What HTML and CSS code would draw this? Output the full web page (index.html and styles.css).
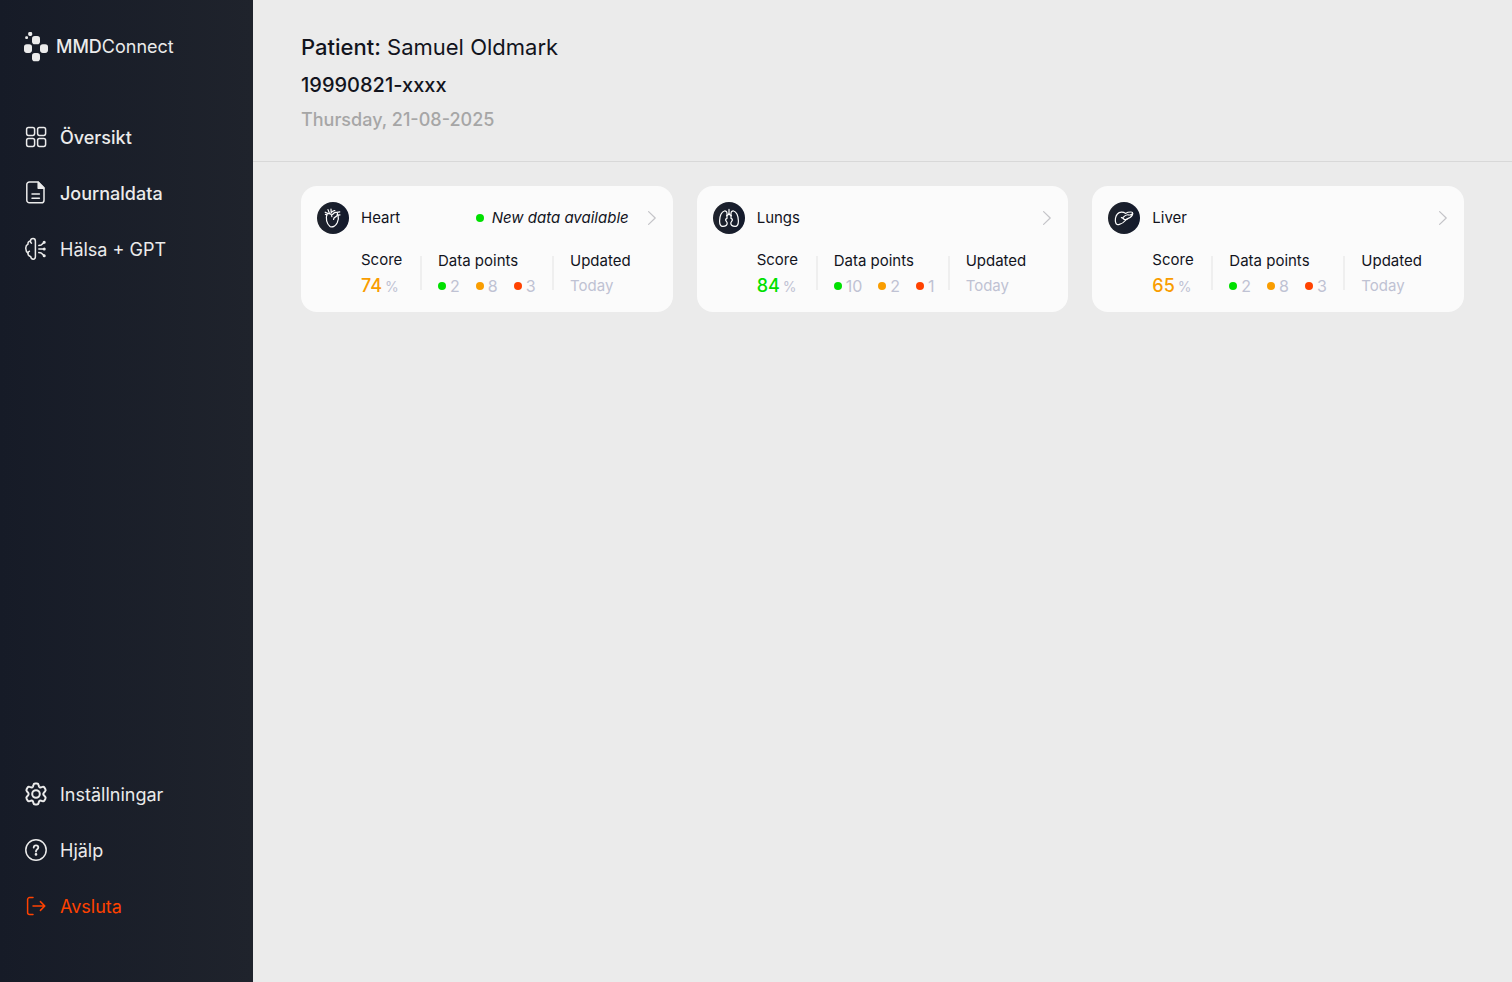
FILE: index.html
```html
<!DOCTYPE html>
<html lang="sv">
<head>
<meta charset="utf-8">
<meta name="viewport" content="width=device-width, initial-scale=1">
<title>MMDConnect</title>
<link rel="stylesheet" href="styles.css">
</head>
<body>
<div class="app">
  <aside class="sidebar">
    <a class="brand" href="#">
      <svg class="brand-mark" viewBox="0 0 24 30" aria-hidden="true">
        <rect x="1.2" y="4.2" width="2.8" height="2.8" rx="1"/>
        <rect x="4.2" y="0" width="4" height="4" rx="1.4"/>
        <rect x="8" y="4" width="8" height="8.2" rx="2.8"/>
        <rect x="0" y="12.3" width="8" height="8.6" rx="2.8"/>
        <rect x="16" y="12.3" width="8" height="8.6" rx="2.8"/>
        <rect x="8" y="21" width="8" height="8.2" rx="2.8"/>
      </svg>
      <span class="brand-name"><strong>MMD</strong>Connect</span>
    </a>
    <nav class="nav" aria-label="Huvudmeny">
      <a class="nav-item nav-item-strong" href="#">
        <svg class="icon" viewBox="0 0 24 24" aria-hidden="true">
          <rect x="2.6" y="2.6" width="8" height="7.8" rx="1.8"/>
          <rect x="13.6" y="2.6" width="8" height="7.8" rx="1.8"/>
          <rect x="2.6" y="13.6" width="8" height="7.8" rx="1.8"/>
          <rect x="13.6" y="13.6" width="8" height="7.8" rx="1.8"/>
        </svg>
        <span class="nav-label">Översikt</span>
      </a>
      <a class="nav-item nav-item-strong" href="#">
        <svg class="icon" viewBox="0 0 24 24" aria-hidden="true">
          <path d="M14.200 1H5.400a2.600 2.600 0 0 0-2.600 2.600v15.600a2.600 2.600 0 0 0 2.600 2.600h12a2.600 2.600 0 0 0 2.600-2.600V6.800z"/>
          <path class="filled" d="M14.200 1.200V7.200h5.600z"/>
          <path d="M8 13h7.400M8 17.200h7.400"/>
        </svg>
        <span class="nav-label">Journaldata</span>
      </a>
      <a class="nav-item" href="#">
        <svg class="icon" viewBox="0 0 24 24" aria-hidden="true">
          <path d="M11.400 4.200C11.400 2.600 10.400 1.600 9 1.600S6.600 2.600 6.400 4C4.600 4.200 3.800 5.400 4 7.200 2.400 8 1.600 9.600 1.800 11.600c0 2.200.8 3.600 2.200 4.400-.2 1.800.8 3.200 2.600 3.400.2 1.600 1.200 2.800 2.600 2.800 1.400 0 2.200-1 2.200-2.600z"/>
          <path d="M6.400 4c0 1 .4 1.800 1 2.200M4 16c0-1 .6-1.600 1.400-1.800M14.800 8.400l2.400-.4 2.600-2.400M14.800 12h5M14.800 15.600l2.400.4 2.600 2.400"/>
          <circle class="filled" cx="20.200" cy="5.200" r=".8"/>
          <circle class="filled" cx="20.200" cy="12" r=".8"/>
          <circle class="filled" cx="20.200" cy="18.800" r=".8"/>
        </svg>
        <span class="nav-label">Hälsa + GPT</span>
      </a>
    </nav>
    <nav class="nav nav-bottom" aria-label="Konto">
      <a class="nav-item" href="#">
        <svg class="icon icon-bold" viewBox="0 0 24 24" aria-hidden="true">
          <path d="M9.400 3c.2-1 .8-1.500 1.700-1.500h1.800c.9 0 1.500.5 1.700 1.500l.3 1.200c.3 1 1.200 1.400 2.200 1.100l1.300-.4c.9-.3 1.600 0 2 .7l1 1.700c.4.800.3 1.500-.4 2.200l-.9.900c-.9.900-.9 2.300 0 3.200l.9.900c.7.700.8 1.400.4 2.200l-1 1.700c-.4.700-1.100 1-2 .7l-1.300-.4c-1-.3-1.900.1-2.200 1.100l-.3 1.200c-.2 1-.8 1.500-1.700 1.500h-1.800c-.9 0-1.500-.5-1.700-1.500l-.3-1.200c-.3-1-1.200-1.400-2.200-1.100l-1.300.4c-.9.300-1.600 0-2-.7l-1-1.700c-.4-.8-.3-1.500.4-2.200l.9-.9c.9-.9.900-2.300 0-3.200l-.9-.9c-.7-.7-.8-1.400-.4-2.200l1-1.700c.4-.7 1.100-1 2-.7l1.300.4c1 .3 1.900-.1 2.200-1.100z"/>
          <circle cx="12" cy="12" r="3.800"/>
        </svg>
        <span class="nav-label">Inställningar</span>
      </a>
      <a class="nav-item" href="#">
        <svg class="icon" viewBox="0 0 24 24" aria-hidden="true">
          <circle cx="12" cy="12" r="10.200"/>
          <path class="heavy" d="M9.700 9.500C9.800 8.100 10.700 7.300 12 7.300s2.300.9 2.300 2.100c0 1-.6 1.500-1.300 2-.7.500-1 .9-1 1.800v.3"/>
          <circle class="filled" cx="12" cy="16.400" r=".6"/>
        </svg>
        <span class="nav-label">Hjälp</span>
      </a>
      <a class="nav-item nav-item-exit" href="#">
        <svg class="icon" viewBox="0 0 24 24" aria-hidden="true">
          <path d="M9 3.600H5.600a2 2 0 0 0-2 2v13a2 2 0 0 0 2 2H9M9 12h11.400M16.400 7.600l4.400 4.400-4.400 4.400"/>
        </svg>
        <span class="nav-label">Avsluta</span>
      </a>
    </nav>
  </aside>

  <main class="main">
    <header class="patient">
      <h1 class="patient-name"><strong>Patient:</strong> Samuel Oldmark</h1>
      <p class="patient-id">19990821-xxxx</p>
      <p class="patient-date">Thursday, 21-08-2025</p>
    </header>

    <section class="cards" aria-label="Organs">
      <article class="card">
        <div class="card-head">
          <span class="organ">
            <svg class="organ-icon" viewBox="0 0 32 32" aria-hidden="true">
              <path d="M10 12.600C8.400 16 9.600 22 13 24.400c2.400 1.400 5.600-.2 7.200-3.600 1.200-2.800 1.600-5.200.8-7.800"/>
              <path d="M8.200 10.200 11.200 11.600M10 12.800 8.400 12.400M11 7.600l1.400 3.600M14 7l.2 3.800M14.200 10.800c1.200-2 2.200-2.400 3.600-2.200M11.200 11.600c2.400-.4 3.800 1 3.600 3M15.600 12.400c1.200-1.800 2.600-2.400 4.200-2l3-.6M20.800 13.200l2.200-.4M20.400 11.400c.4 2.200-1.200 3.400-2.600 4-.8.400-1.200 1.200-1.200 2"/>
            </svg>
          </span>
          <h2 class="card-title">Heart</h2>
          <p class="notice"><span class="dot good"></span>New data available</p>
          <button class="open" type="button" aria-label="Open Heart"><svg class="chevron" viewBox="0 0 8 14" aria-hidden="true"><path d="M.6.6 7.200 7 .6 13.400"/></svg></button>
        </div>
        <div class="stats">
          <div class="stat stat-score"><h3 class="label">Score</h3><p class="score mid">74<span class="unit">%</span></p></div>
          <span class="rule"></span>
          <div class="stat"><h3 class="label">Data points</h3><p class="points"><span class="point"><span class="dot good"></span>2</span><span class="point"><span class="dot fair"></span>8</span><span class="point"><span class="dot poor"></span>3</span></p></div>
          <span class="rule"></span>
          <div class="stat"><h3 class="label">Updated</h3><p class="points updated">Today</p></div>
        </div>
      </article>

      <article class="card">
        <div class="card-head">
          <span class="organ">
            <svg class="organ-icon" viewBox="0 0 32 32" aria-hidden="true">
              <path d="M16 7.400v3.800M16 11.200c-.4 1.200-1.200 2-2.400 2.600M16 11.200c.4 1.200 1.200 2 2.400 2.600"/>
              <path d="M14 16.400V11.400c0-1.600-1-2.600-2.600-2.400C8.600 9.600 6.600 14 6.600 19c0 3.400 1 5.400 3.200 5.400 2.400-.2 4.400-1 4.400-3.200 0-1.600-1.600-2-1.600-3.400 0-.6.400-1 1.400-1.400zM18 16.400V11.400c0-1.600 1-2.600 2.600-2.400 2.800.6 4.800 5 4.800 10 0 3.400-1 5.400-3.200 5.400-2.400-.2-4.400-1-4.400-3.200 0-1.600 1.600-2 1.600-3.400 0-.6-.4-1-1.400-1.400z"/>
            </svg>
          </span>
          <h2 class="card-title">Lungs</h2>
          <button class="open" type="button" aria-label="Open Lungs"><svg class="chevron" viewBox="0 0 8 14" aria-hidden="true"><path d="M.6.6 7.200 7 .6 13.400"/></svg></button>
        </div>
        <div class="stats">
          <div class="stat stat-score"><h3 class="label">Score</h3><p class="score high">84<span class="unit">%</span></p></div>
          <span class="rule"></span>
          <div class="stat"><h3 class="label">Data points</h3><p class="points"><span class="point"><span class="dot good"></span>10</span><span class="point"><span class="dot fair"></span>2</span><span class="point"><span class="dot poor"></span>1</span></p></div>
          <span class="rule"></span>
          <div class="stat"><h3 class="label">Updated</h3><p class="points updated">Today</p></div>
        </div>
      </article>

      <article class="card">
        <div class="card-head">
          <span class="organ">
            <svg class="organ-icon" viewBox="0 0 32 32" aria-hidden="true">
              <path d="M17.400 11.400c-2.200-1.800-6-1.600-8 .6-2 2-2.600 6.400-1.600 9 .6 1.600 2 2 3.600 1.400 2-.6 4-1.600 5.400-3.400 1-1.400 1.800-2 3.400-2.600 2.600-1 4.400-3 4.600-5 0-1-.6-1.400-1.800-1.400-1.800 0-3.600.2-5.600 1.400z"/>
              <path d="M24.200 12c-1 1.200-2.400 1.200-4 .8-1.600-.2-3.400.8-4.800 2.400M13.400 15.600c1.400 0 2 1.200 2.800 1.800 1 .4 2 .2 3-.4"/>
            </svg>
          </span>
          <h2 class="card-title">Liver</h2>
          <button class="open" type="button" aria-label="Open Liver"><svg class="chevron" viewBox="0 0 8 14" aria-hidden="true"><path d="M.6.6 7.200 7 .6 13.400"/></svg></button>
        </div>
        <div class="stats">
          <div class="stat stat-score"><h3 class="label">Score</h3><p class="score mid">65<span class="unit">%</span></p></div>
          <span class="rule"></span>
          <div class="stat"><h3 class="label">Data points</h3><p class="points"><span class="point"><span class="dot good"></span>2</span><span class="point"><span class="dot fair"></span>8</span><span class="point"><span class="dot poor"></span>3</span></p></div>
          <span class="rule"></span>
          <div class="stat"><h3 class="label">Updated</h3><p class="points updated">Today</p></div>
        </div>
      </article>
    </section>
  </main>
</div>
</body>
</html>
```
FILE: styles.css
```css
* {
  box-sizing: border-box;
}

body,
h1,
h2,
h3,
p {
  margin: 0;
}

body {
  background: #ebebeb;
  color: #12141d;
  font-family: Inter, "Liberation Sans", sans-serif;
}

.app {
  display: flex;
  min-height: 100vh;
}

/* Sidebar */
.sidebar {
  flex: 0 0 253px;
  display: flex;
  flex-direction: column;
  padding: 32px 24px 63px;
  background: linear-gradient(90deg, #161b27, #1f232c);
  color: #ebebeb;
}

.brand {
  display: flex;
  align-items: center;
  gap: 8px;
  margin-bottom: 62px;
  color: inherit;
  text-decoration: none;
}

.brand-mark {
  width: 24px;
  height: 30px;
  fill: currentColor;
}

.brand-name {
  font-size: 18px;
  line-height: 24px;
}

.brand-name strong {
  font-weight: 500;
}

.nav {
  display: flex;
  flex-direction: column;
  gap: 30px;
}

.nav-bottom {
  margin-top: auto;
}

.nav-item {
  display: flex;
  align-items: center;
  gap: 12px;
  color: inherit;
  font-size: 18px;
  line-height: 24px;
  text-decoration: none;
}

.nav-label {
  padding-top: 2px;
}

.nav-item-strong {
  font-weight: 500;
}

.nav-item-exit {
  color: #ff4200;
}

.icon {
  width: 24px;
  height: 24px;
  fill: none;
  stroke: currentColor;
  stroke-width: 1.5;
  stroke-linecap: round;
  stroke-linejoin: round;
}

.icon-bold {
  stroke-width: 2;
}

.icon .heavy {
  stroke-width: 1.8;
}

.icon .filled {
  fill: currentColor;
}

/* Patient header */
.main {
  flex: 1;
  min-width: 0;
}

.patient {
  padding: 32px 48px 29px;
  border-bottom: 1px solid #d8d8d8;
}

.patient-name {
  font-size: 22px;
  font-weight: 400;
  line-height: 30px;
}

.patient-name strong {
  font-weight: 500;
}

.patient-id {
  margin-top: 10px;
  font-size: 20px;
  font-weight: 500;
  line-height: 26px;
}

.patient-date {
  margin-top: 10px;
  color: #a6a6a6;
  font-size: 18px;
  font-weight: 500;
  line-height: 24px;
}

/* Organ cards */
.cards {
  display: grid;
  grid-template-columns: repeat(3, minmax(0, 1fr));
  gap: 24px;
  padding: 24px 48px;
}

.card {
  padding: 16px 16px 13px;
  border-radius: 16px;
  background: #fbfbfb;
}

.card-head {
  display: flex;
  align-items: center;
}

.organ {
  width: 32px;
  height: 32px;
  margin-right: 12px;
  border-radius: 50%;
  background: linear-gradient(90deg, #1f232c, #131a2c);
}

.organ-icon {
  display: block;
  width: 32px;
  height: 32px;
  fill: none;
  stroke: #fff;
  stroke-width: 1.2;
  stroke-linecap: round;
  stroke-linejoin: round;
}

.card-title {
  font-size: 15px;
  font-weight: 400;
  line-height: 20px;
}

.notice {
  display: flex;
  align-items: center;
  gap: 8px;
  margin-left: auto;
  font-size: 15px;
  font-style: italic;
  line-height: 20px;
}

.open {
  display: flex;
  margin-left: auto;
  padding: 0;
  border: 0;
  background: none;
  cursor: pointer;
}

.notice + .open {
  margin-left: 18px;
}

.chevron {
  width: 10px;
  height: 14px;
  fill: none;
  stroke: #c4c4c8;
  stroke-width: 1.2;
  stroke-linecap: round;
  stroke-linejoin: round;
}

.stats {
  display: grid;
  grid-template-columns: 59px 2px 130px 2px auto;
  justify-content: start;
  margin: 16px 0 0 44px;
}

.stat {
  padding: 1px 0 0 16px;
}

.stat-score {
  padding: 0;
}

.rule {
  height: 34px;
  margin-top: 6px;
  background: #efefef;
}

.label {
  font-size: 15px;
  font-weight: 400;
  line-height: 20px;
  white-space: nowrap;
}

.score {
  margin-top: 4px;
  font-size: 18px;
  font-weight: 500;
  line-height: 24px;
}

.high {
  color: #00e000;
}

.mid {
  color: #f99d00;
}

.unit {
  margin-left: 3px;
  color: #bfc2d3;
  font-size: 14px;
  font-weight: 400;
}

.points {
  display: flex;
  gap: 16px;
  margin-top: 5px;
  color: #bfc2d3;
  font-size: 16px;
  font-weight: 400;
  line-height: 20px;
}

.updated {
  font-size: 15px;
}

.point {
  display: flex;
  align-items: center;
  gap: 4px;
}

.dot {
  width: 8px;
  height: 8px;
  border-radius: 50%;
}

.good {
  background: #00e000;
}

.fair {
  background: #f99d00;
}

.poor {
  background: #ff4200;
}
```
